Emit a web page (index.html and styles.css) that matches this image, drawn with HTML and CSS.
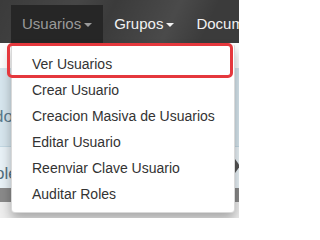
FILE: index.html
```html
<!DOCTYPE html>
<html lang="es">
<head>
<meta charset="utf-8">
<title>Usuarios</title>
<link rel="stylesheet" href="styles.css">
</head>
<body>
<div class="page">
  <nav class="navbar">
    <ul class="nav">
      <li class="nav-item active">
        <a class="nav-link">Usuarios<span class="caret"></span></a>
        <ul class="dropdown-menu">
          <li><a>Ver Usuarios</a></li>
          <li><a>Crear Usuario</a></li>
          <li><a>Creacion Masiva de Usuarios</a></li>
          <li><a>Editar Usuario</a></li>
          <li><a>Reenviar Clave Usuario</a></li>
          <li><a>Auditar Roles</a></li>
        </ul>
        <div class="highlight"></div>
      </li>
      <li class="nav-item"><a class="nav-link">Grupos<span class="caret"></span></a></li>
      <li class="nav-item"><a class="nav-link">Documentos</a></li>
    </ul>
  </nav>
  <div class="content">
    <div class="band-white"></div>
    <div class="band-blue"><span class="cut-text">do</span></div>
    <div class="band-light"><span class="cut-text">ole</span><span class="arrow"></span></div>
    <div class="band-gray"></div>
    <div class="band-bottom"></div>
  </div>
</div>
</body>
</html>
```

FILE: styles.css
```css
html, body {
  margin: 0;
  padding: 0;
  overflow: hidden;
}
body {
  font-family: "Liberation Sans", Arial, sans-serif;
  background: #ffffff;
}
.page {
  width: 239px;
  height: 218px;
  position: relative;
  overflow: hidden;
}
.navbar {
  height: 43px;
  padding-left: 11px;
  background:
    linear-gradient(115deg, rgba(255,255,255,0) 0%, rgba(255,255,255,0.06) 30%, rgba(255,255,255,0) 45%, rgba(255,255,255,0.08) 70%, rgba(255,255,255,0) 85%),
    #3b3b3b;
  position: relative;
  z-index: 2;
}
.nav {
  list-style: none;
  margin: 0;
  padding: 5px 0 0 0;
  display: flex;
  white-space: nowrap;
}
.nav-item {
  position: relative;
}
.nav-link {
  display: block;
  height: 38px;
  line-height: 38px;
  padding: 0 11px 0 11px;
  font-size: 15px;
  color: #f2f2f2;
}
.nav-item.active .nav-link {
  background: #262626;
  color: #9a9a9a;
}
.caret {
  display: inline-block;
  width: 0;
  height: 0;
  margin-left: 3px;
  vertical-align: middle;
  border-top: 4px solid;
  border-left: 4px solid transparent;
  border-right: 4px solid transparent;
}
.dropdown-menu {
  position: absolute;
  top: 100%;
  left: 0;
  margin: 2px 0 0 0;
  padding: 5px 0;
  width: 222px;
  list-style: none;
  background: #fff;
  border: 1px solid rgba(0,0,0,0.15);
  border-top-color: rgba(0,0,0,0.05);
  border-radius: 0 0 4px 4px;
  box-shadow: 0 6px 12px rgba(0,0,0,0.3);
}
.dropdown-menu a {
  display: block;
  padding: 3px 20px;
  font-size: 14px;
  line-height: 20px;
  color: #333;
}
.highlight {
  position: absolute;
  left: -4px;
  top: 38px;
  width: 220px;
  height: 29px;
  border: 3px solid #e5383d;
  border-radius: 5px;
}
.content {
  display: flex;
  flex-direction: column;
}
.band-white {
  height: 25px;
  background: #fdfdfd;
}
.band-blue {
  height: 79px;
  background: #d7e6ee;
  border-bottom: 1px solid #c4d9e4;
  display: flex;
  align-items: flex-end;
  padding-bottom: 19px;
  box-sizing: border-box;
}
.cut-text {
  font-size: 17px;
  color: #5b7b8c;
  margin-left: -6px;
}
.band-light {
  height: 41px;
  background: #e9f2f7;
  display: flex;
  align-items: center;
  justify-content: space-between;
}
.band-light .cut-text {
  margin-left: -5px;
  margin-top: 12px;
  color: #52707f;
}
.arrow {
  width: 0;
  height: 0;
  border-top: 7px solid transparent;
  border-bottom: 7px solid transparent;
  border-left: 5px solid #555;
  margin-right: -1px;
  margin-top: -4px;
}
.band-gray {
  height: 14px;
  background: #8a8a8a;
}
.band-bottom {
  height: 20px;
  background: #eeeeee;
}
```
